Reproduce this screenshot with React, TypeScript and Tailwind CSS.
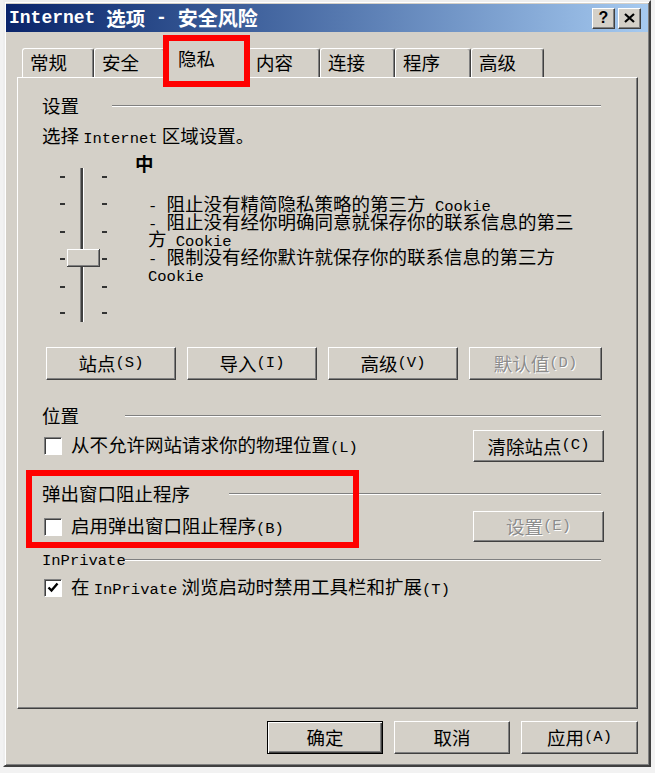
import React from 'react';

// Latin runs in the dialog use a fixed-width face, like the SimSun latin glyphs
const M: React.FC<{ children: React.ReactNode; className?: string }> = ({ children, className = '' }) => (
  <span className={`font-['Liberation_Mono',monospace] text-[15.5px] ${className}`}>{children}</span>
);

const Btn: React.FC<{ children: React.ReactNode; className?: string; disabled?: boolean; isDefault?: boolean }> = ({
  children,
  className = '',
  disabled = false,
  isDefault = false,
}) => (
  <button
    type="button"
    className={`flex items-center justify-center bg-[#d4d0c8] text-[18.5px] leading-none
    ${isDefault
      ? 'border border-black shadow-[inset_1px_1px_0_#fff,inset_-1px_-1px_0_#404040,inset_-2px_-2px_0_#808080]'
      : 'border border-t-white border-l-white border-r-[#404040] border-b-[#404040] shadow-[inset_-1px_-1px_0_#808080]'}
    ${disabled ? 'text-[#8c8c8c] [text-shadow:1px_1px_0_#fff]' : 'text-black'} ${className}`}
  >
    {children}
  </button>
);

const Check: React.FC<{ checked?: boolean }> = ({ checked = false }) => (
  <div className="ml-[2px] w-[18px] h-[18px] shrink-0 bg-white border border-t-[#808080] border-l-[#808080] border-r-white border-b-white shadow-[inset_1px_1px_0_#404040] flex items-center justify-center">
    {checked && (
      <svg width="12" height="11" viewBox="0 0 12 11">
        <path d="M1.5 5.5 L4.5 8.5 L10.5 1.5" fill="none" stroke="#000" strokeWidth="2.4" />
      </svg>
    )}
  </div>
);

const Group: React.FC<{ label: React.ReactNode; labelW: string; className?: string }> = ({ label, labelW, className = '' }) => (
  <div className={`flex items-center h-[20px] ${className}`}>
    <div className={`${labelW} shrink-0 leading-[20px] whitespace-nowrap`}>{label}</div>
    <div className="flex-1 mr-[3px] mt-[2px] border-t border-t-[#808080] border-b border-b-white" />
  </div>
);

const Slider: React.FC = () => (
  <svg width="50" height="154" viewBox="0 0 50 154">
    {[9, 36, 64, 91, 119, 145].map((y) => (
      <g key={y}>
        <rect x="2" y={y - 1} width="5" height="2" fill="#333" />
        <rect x="44" y={y - 1} width="5" height="2" fill="#333" />
      </g>
    ))}
    <rect x="22" y="0" width="1" height="154" fill="#808080" />
    <rect x="23" y="0" width="2" height="154" fill="#404040" />
    <rect x="25" y="0" width="1" height="154" fill="#fff" />
    <rect x="9" y="81" width="33" height="18" fill="#d4d0c8" />
    <rect x="9" y="81" width="32" height="1" fill="#fff" />
    <rect x="9" y="81" width="1" height="17" fill="#fff" />
    <rect x="9" y="98" width="33" height="1" fill="#404040" />
    <rect x="41" y="81" width="1" height="18" fill="#404040" />
    <rect x="10" y="97" width="31" height="1" fill="#808080" />
    <rect x="40" y="82" width="1" height="16" fill="#808080" />
  </svg>
);

const tabs = [
  { label: '常规', w: 'w-[72px]' },
  { label: '安全', w: 'w-[71px]' },
  { label: '隐私', w: 'w-[87px]', sel: true },
  { label: '内容', w: 'w-[72px]' },
  { label: '连接', w: 'w-[75px]' },
  { label: '程序', w: 'w-[76px]' },
  { label: '高级', w: 'w-[73px]' },
];

// one visual row of the description; fixed height keeps the tight spacing of the original
const Line: React.FC<{ children: React.ReactNode }> = ({ children }) => (
  <div className="h-[17.5px] leading-[17.5px] whitespace-nowrap">{children}</div>
);

export default function App() {
  return (
    <div className="relative w-[655px] h-[773px] bg-[#f2f2f2] overflow-hidden font-['Noto_Sans_CJK_SC',sans-serif] text-[18.5px] text-black">
      <div className="ml-[3px] w-[648px] h-[767px] bg-[#d4d0c8] border-2 border-t-[#eeeeee] border-l-[#eeeeee] border-r-[#404040] border-b-[#404040] shadow-[inset_1px_1px_0_#fff,inset_-1px_-1px_0_#808080] px-[1px] py-[2px] flex flex-col">
        {/* title bar */}
        <div className="h-[28px] shrink-0 flex items-center bg-linear-to-r from-[#0a246a] to-[#a6caf0] pl-[3px] pr-[7px]">
          <div className="flex items-center text-white font-bold leading-none whitespace-pre">
            <M className="text-[18px] whitespace-pre">{'Internet '}</M>
            <span className="text-[19.5px]">选项</span>
            <M className="text-[18px] whitespace-pre">{' - '}</M>
            <span className="text-[20px]">安全风险</span>
          </div>
          <div className="ml-auto flex gap-[3px]">
            <div className="w-[23px] h-[21px] bg-[#d4d0c8] border border-t-white border-l-white border-r-[#404040] border-b-[#404040] shadow-[inset_-1px_-1px_0_#808080] flex items-center justify-center font-['Liberation_Sans',sans-serif] font-bold text-[16px] leading-none">
              ?
            </div>
            <div className="w-[23px] h-[21px] bg-[#d4d0c8] border border-t-white border-l-white border-r-[#404040] border-b-[#404040] shadow-[inset_-1px_-1px_0_#808080] flex items-center justify-center">
              <svg width="11" height="10" viewBox="0 0 11 10">
                <path d="M1 1 L10 9 M10 1 L1 9" stroke="#000" strokeWidth="2.2" />
              </svg>
            </div>
          </div>
        </div>

        {/* body */}
        <div className="flex-1 flex flex-col pl-[11px] pr-[10px]">
          {/* tabs */}
          <div className="relative z-10 mt-[8px] h-[37px] flex items-end pl-[5px]">
            {tabs.map((t) =>
              t.sel ? (
                <div
                  key={t.label}
                  className={`${t.w} -mx-[2px] -mb-[1px] h-[38px] bg-[#d4d0c8] rounded-t-[3px] border-t border-l border-t-white border-l-white border-r border-r-[#404040] shadow-[inset_-1px_0_0_#808080] flex items-center pl-[14px] pb-[2px]`}
                >
                  {t.label}
                </div>
              ) : (
                <div
                  key={t.label}
                  className={`${t.w} h-[29px] bg-[#d4d0c8] rounded-t-[3px] border-t border-l border-t-white border-l-white border-r border-r-[#404040] shadow-[inset_-1px_0_0_#808080] flex items-center pl-[7px]`}
                >
                  {t.label}
                </div>
              )
            )}
          </div>

          {/* tab panel */}
          <div className="h-[632px] shrink-0 border-t border-l border-t-white border-l-white border-r border-b border-r-[#404040] border-b-[#404040] shadow-[inset_-1px_-1px_0_#808080] pt-[17px] pl-[24px] pr-[33px]">
            <Group label="设置" labelW="w-[70px]" />
            <div className="mt-[10px] h-[20px] leading-[20px] whitespace-nowrap">
              选择 <M>Internet</M> 区域设置。
            </div>

            <div className="mt-[9px] h-[193px] flex items-start">
              <div className="ml-[16px] mt-[14px]">
                <Slider />
              </div>
              <div className="ml-[27px]">
                <div className="font-bold leading-[18px]">中</div>
                <div className="mt-[23px] pl-[13px]">
                  <Line>
                    <M className="whitespace-pre leading-[17.5px]">{'- '}</M>阻止没有精简隐私策略的第三方
                    <M className="whitespace-pre leading-[17.5px]">{' Cookie'}</M>
                  </Line>
                  <Line>
                    <M className="whitespace-pre leading-[17.5px]">{'- '}</M>阻止没有经你明确同意就保存你的联系信息的第三
                  </Line>
                  <Line>
                    方<M className="whitespace-pre leading-[17.5px]">{' Cookie'}</M>
                  </Line>
                  <Line>
                    <M className="whitespace-pre leading-[17.5px]">{'- '}</M>限制没有经你默许就保存你的联系信息的第三方
                  </Line>
                  <Line>
                    <M className="leading-[17.5px]">Cookie</M>
                  </Line>
                </div>
              </div>
            </div>

            <div className="ml-[4px] flex gap-[11px]">
              <Btn className="w-[130px] h-[33px]">
                站点<M>(S)</M>
              </Btn>
              <Btn className="w-[130px] h-[33px]">
                导入<M>(I)</M>
              </Btn>
              <Btn className="w-[130px] h-[33px]">
                高级<M>(V)</M>
              </Btn>
              <Btn className="w-[133px] h-[33px]" disabled>
                默认值<M>(D)</M>
              </Btn>
            </div>

            <Group label="位置" labelW="w-[83px]" className="mt-[25px]" />
            <div className="mt-[5px] h-[32px] flex items-center">
              <Check />
              <span className="ml-[9px] whitespace-nowrap">
                从不允许网站请求你的物理位置<M>(L)</M>
              </span>
              <Btn className="ml-auto w-[131px] h-[32px]">
                清除站点<M>(C)</M>
              </Btn>
            </div>

            <Group label="弹出窗口阻止程序" labelW="w-[187px]" className="mt-[21px]" />
            <div className="mt-[8px] h-[31px] flex items-center">
              <Check />
              <span className="ml-[9px] whitespace-nowrap">
                启用弹出窗口阻止程序<M>(B)</M>
              </span>
              <Btn className="ml-auto w-[131px] h-[31px]" disabled>
                设置<M>(E)</M>
              </Btn>
            </div>

            <Group label={<M>InPrivate</M>} labelW="w-[83px]" className="mt-[7px]" />
            <div className="mt-[8px] h-[21px] flex items-center">
              <Check checked />
              <span className="ml-[9px] whitespace-nowrap">
                在 <M>InPrivate</M> 浏览启动时禁用工具栏和扩展<M>(T)</M>
              </span>
            </div>
          </div>

          {/* footer */}
          <div className="mt-[12px] flex justify-end gap-[11px]">
            <Btn className="w-[116px] h-[33px]" isDefault>
              确定
            </Btn>
            <Btn className="w-[116px] h-[33px]">取消</Btn>
            <Btn className="w-[117px] h-[33px]">
              应用<M>(A)</M>
            </Btn>
          </div>
        </div>
      </div>

      {/* red annotation boxes */}
      <div className="absolute left-[163px] top-[35px] w-[87px] h-[52px] border-[6px] border-[#f00] z-20 pointer-events-none" />
      <div className="absolute left-[26px] top-[470px] w-[333px] h-[78px] border-[6px] border-[#f00] z-20 pointer-events-none" />
    </div>
  );
}
